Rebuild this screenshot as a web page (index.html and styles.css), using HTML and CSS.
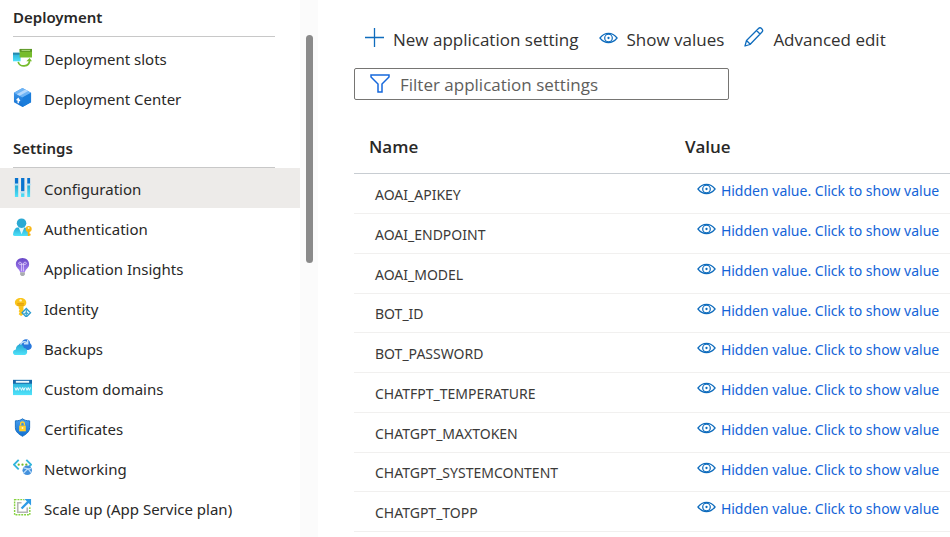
FILE: index.html
```html
<!DOCTYPE html>
<html lang="en">
<head>
<meta charset="utf-8">
<title>Configuration</title>
<link rel="stylesheet" href="styles.css">
</head>
<body>
<svg class="defs" aria-hidden="true">
  <defs>
    <linearGradient id="cyan" x1="0" y1="0" x2="0" y2="1"><stop offset="0" stop-color="#27a9d3"/><stop offset="1" stop-color="#4fe3fa"/></linearGradient>
    <linearGradient id="blue" x1="0" y1="0" x2="0" y2="1"><stop offset="0" stop-color="#4ba0ee"/><stop offset="1" stop-color="#0f6fd2"/></linearGradient>
    <linearGradient id="violet" x1="0" y1="0" x2="0" y2="1"><stop offset="0" stop-color="#6746c6"/><stop offset="1" stop-color="#a883f2"/></linearGradient>
    <symbol id="eye" viewBox="0 0 20 12">
      <g fill="none" stroke="currentColor" stroke-width="1.3"><path d="M1 6C3.500 2.800 6.500 1.200 10 1.200S16.500 2.800 19 6C16.500 9.200 13.500 10.800 10 10.800S3.500 9.200 1 6Z"/><circle cx="10" cy="6" r="4"/></g>
      <circle cx="10" cy="6" r="1.200" fill="currentColor"/>
    </symbol>
  </defs>
</svg>
<div class="app">
  <nav class="sidebar" aria-label="App service">
    <div class="menu">
      <h2 class="group first">Deployment</h2>
      <a class="item" href="#slots"><svg viewBox="0 0 20 20"><path fill="url(#cyan)" d="M0 5h8v9H0z"/><path fill="#2789ad" d="M0 5h7v2H0z"/><path fill="#76bc2d" d="M7 1h13v9H7z"/><path fill="#5a9624" d="M7 1h13v3H7z"/><path stroke="#b4dd8a" d="M9 2.500h9"/><path d="M5.500 14.500c1 6 12 6 12-2" fill="none" stroke="#76bc2d" stroke-width="1.800"/><path fill="#76bc2d" d="m14 14 3.500-3.500L20 14z"/></svg>Deployment slots</a>
      <a class="item" href="#center"><svg viewBox="0 0 20 20"><path fill="url(#blue)" d="m10 0 9 5v10l-9 5-9-5V5z"/><path fill="#6fb4f5" d="m1 5 9-5 9 5-9 5z"/><path fill="#1b7ddb" d="m10 10 9-5v10l-9 5z"/><path fill="#b4d8fc" d="m4 6.500 9-5 3 1.700-9 5z"/><path d="M5.500 16v-4M3.800 12.800l1.700-1.600 1.700 2.600" fill="none" stroke="#fff" stroke-width="1.400"/></svg>Deployment Center</a>
      <h2 class="group">Settings</h2>
      <a class="item selected" href="#configuration" aria-current="page"><svg viewBox="0 0 20 20"><path fill="#0873cf" d="M2 0h3.500v6H2zM8.500 0H12v14H8.500zM15 0h3v6h-3z"/><path fill="url(#cyan)" d="M2 7.500h3.500V20H2zM8.500 16H12v4H8.500zM15 7.500h3V20h-3z"/><path fill="#b7e4f6" d="M1 6h5.500v1.500H1zM7.500 14.500H13V16H7.500zM14 6h5v1.500h-5z"/></svg>Configuration</a>
      <a class="item" href="#authentication"><svg viewBox="0 0 20 20"><path fill="url(#cyan)" d="M0 17c1-5 3-7 5-7h7c2 0 4 2 4 9H2q-2 0-2-2z"/><path fill="#e4f8fd" d="M6 10h6l-3 7z"/><circle cx="9" cy="5.500" r="5" fill="#2ba9d3"/><circle cx="16.500" cy="11.500" r="3.200" fill="#f8b818"/><path d="M16.500 13v6M16.500 17.500h2" stroke="#f5ad10" stroke-width="1.900"/><circle cx="16.500" cy="10.500" r="1" fill="#fff2bd"/></svg>Authentication</a>
      <a class="item" href="#insights"><svg viewBox="0 0 20 20"><path fill="url(#violet)" d="M10 0C6 0 3 3 3 6.500c0 4 4 5 4.500 8.500h5c.5-3.500 4.500-4.500 4.500-8.500C17 3 14 0 10 0Z"/><path d="M9 14V6.500M11 14V6.500M9 7c-3.500.5-4-3-1.500-2.500C9 4.700 9 5.500 9 7M11 7c3.500.5 4-3 1.500-2.500C11 4.700 11 5.500 11 7M8 6.500h4" fill="none" stroke="#decef9" stroke-width=".9"/><path fill="#a9acaf" d="M7.500 15h5v2.500L11 19H9l-1.500-1.500z"/></svg>Application Insights</a>
      <a class="item" href="#identity"><svg viewBox="0 0 20 20"><path fill="#fac51c" d="M8 0c3.500 0 6 2 6 5 0 2-1.300 3.400-3 4v8l-2.500 2L6 17l1-2-1-1 1-2-1-1V9C3.500 8.400 2 7 2 5c0-3 2.500-5 6-5Z"/><circle cx="8" cy="2.500" r="1.300" fill="#fff5cb"/><path stroke="#e09a0a" d="M4.500 6h7M4.500 7.500h7"/><path fill="#e9f7fb" stroke="#2b9acf" stroke-width="1.300" d="m14 11 4.500 4.500L14 20l-4.500-4.500z"/><path d="M14 12v7M12 17l2-2 2 2" fill="none" stroke="#37a4cc" stroke-width="1.200"/></svg>Identity</a>
      <a class="item" href="#backups"><svg viewBox="0 0 20 20"><path fill="#2878dc" d="M8 12C5 9 6 5.500 9 5c1-5 9-5 9 .5 3 2 2 7-2 7z"/><path d="M8 8c0-4 4-5 7-3M15.500 2v4h-4" fill="none" stroke="#c2e0fa" stroke-width="1.500"/><path fill="url(#cyan)" d="M3 18c-4 0-4-5.500 0-6C3 6 10.500 5 11.500 10.500 16 10.500 16 18 12 18z"/></svg>Backups</a>
      <a class="item" href="#domains"><svg viewBox="0 0 20 20"><path fill="url(#cyan)" d="M0 2h20v16H0z"/><path fill="#1767a8" d="M0 2h20v4H0z"/><path fill="#eefaff" d="M3 3h14v2H3z"/><path d="m2 10 1.200 3 1.200-3 1.200 3 1.200-3m1 0L9 13l1.200-3 1.200 3 1.200-3m1 0 1.200 3 1.200-3 1.200 3 1.200-3" fill="none" stroke="#f4fdff" stroke-width="1"/></svg>Custom domains</a>
      <a class="item" href="#certificates"><svg viewBox="0 0 20 20"><path fill="url(#blue)" stroke="#176fc2" d="M2.500 3C5.500 3 8 2.500 10 .8 12 2.500 14.500 3 17.500 3v7c0 5-4 7-7.500 9.300C6.500 17 2.500 15 2.500 10z"/><path fill="#ffce2c" d="M6.500 8h7v6h-7z"/><path d="M8 8V6.500c0-3 4-3 4 0V8" fill="none" stroke="#ffce2c" stroke-width="1.400"/><circle cx="10" cy="10.500" r="1" fill="#fff4c7"/></svg>Certificates</a>
      <a class="item" href="#networking"><svg viewBox="0 0 20 20"><path d="M6 2 1 7l5 5M14 2l5 5-2 2" fill="none" stroke="#32b5dc" stroke-width="2"/><g fill="#76bc2d"><circle cx="6" cy="7" r="1.200"/><circle cx="10" cy="7" r="1.200"/><circle cx="14" cy="7" r="1.200"/></g><circle cx="15" cy="13" r="5" fill="#4390dc"/><path d="m11 10.500 5 1 3 4M11 16l4-4 4-1" fill="none" stroke="#b9dcfa" stroke-width="1.300"/></svg>Networking</a>
      <a class="item" href="#scale"><svg viewBox="0 0 20 20"><path d="M1.700 1.700h16v16h-16z" fill="none" stroke="#86d241" stroke-width="1.500" stroke-dasharray="2 1"/><path d="M9 5H5v10h10v-5" fill="none" stroke="#b4b4b4" stroke-width="1.700"/><path fill="#fff" d="M11 0h9v9h-4z"/><path d="m9 11 8-8" stroke="#2f9be5" stroke-width="2.400"/><path fill="#2f9be5" d="M12 1h7v7z"/></svg>Scale up (App Service plan)</a>
    </div>
    <div class="gutter"><div class="thumb"></div></div>
  </nav>
  <main class="content">
    <div class="toolbar">
      <button type="button" class="command"><svg class="command-icon" viewBox="0 0 20 20"><path d="M10.500 1v19M1 10.500h19" stroke="currentColor" stroke-width="1.300"/></svg><span>New application setting</span></button>
      <button type="button" class="command"><svg class="eye"><use href="#eye"/></svg><span>Show values</span></button>
      <button type="button" class="command"><svg class="command-icon" viewBox="0 0 20 20"><path d="m1 19 1.500-5.500L14.500 1.500c2-2 5.500 1.500 3.500 3.500L6 17.500zM12.500 3.500 16 7M2.500 13.500l4 4" fill="none" stroke="currentColor" stroke-width="1.300" stroke-linejoin="round"/></svg><span>Advanced edit</span></button>
    </div>
    <label class="filter">
      <svg viewBox="0 0 20 20"><path d="M1 1h18v2l-7 7v8H8v-8L1 3z" fill="none" stroke="currentColor" stroke-width="1.500"/></svg>
      <input type="text" placeholder="Filter application settings" aria-label="Filter application settings">
    </label>
    <table class="settings">
      <thead><tr><th scope="col">Name</th><th scope="col">Value</th></tr></thead>
      <tbody>
        <tr><td>AOAI_APIKEY</td><td><button type="button" class="reveal"><svg class="eye"><use href="#eye"/></svg><span>Hidden value. Click to show value</span></button></td></tr>
        <tr><td>AOAI_ENDPOINT</td><td><button type="button" class="reveal"><svg class="eye"><use href="#eye"/></svg><span>Hidden value. Click to show value</span></button></td></tr>
        <tr><td>AOAI_MODEL</td><td><button type="button" class="reveal"><svg class="eye"><use href="#eye"/></svg><span>Hidden value. Click to show value</span></button></td></tr>
        <tr><td>BOT_ID</td><td><button type="button" class="reveal"><svg class="eye"><use href="#eye"/></svg><span>Hidden value. Click to show value</span></button></td></tr>
        <tr><td>BOT_PASSWORD</td><td><button type="button" class="reveal"><svg class="eye"><use href="#eye"/></svg><span>Hidden value. Click to show value</span></button></td></tr>
        <tr><td>CHATFPT_TEMPERATURE</td><td><button type="button" class="reveal"><svg class="eye"><use href="#eye"/></svg><span>Hidden value. Click to show value</span></button></td></tr>
        <tr><td>CHATGPT_MAXTOKEN</td><td><button type="button" class="reveal"><svg class="eye"><use href="#eye"/></svg><span>Hidden value. Click to show value</span></button></td></tr>
        <tr><td>CHATGPT_SYSTEMCONTENT</td><td><button type="button" class="reveal"><svg class="eye"><use href="#eye"/></svg><span>Hidden value. Click to show value</span></button></td></tr>
        <tr><td>CHATGPT_TOPP</td><td><button type="button" class="reveal"><svg class="eye"><use href="#eye"/></svg><span>Hidden value. Click to show value</span></button></td></tr>
      </tbody>
    </table>
  </main>
</div>
</body>
</html>
```

FILE: styles.css
```css
* { box-sizing: border-box; }
body {
  margin: 0;
  background: #fff;
  color: #292827;
  font-family: "Segoe UI", "Noto Sans", "Open Sans", sans-serif;
  font-size: 15px;
}
button, input { font: inherit; }
button { border: 0; padding: 0; background: none; cursor: pointer; }
.defs { display: block; width: 0; height: 0; }
.app { display: flex; min-height: 100vh; }

.sidebar { display: flex; flex: none; }
.menu { width: 300px; }
.group {
  height: 50px;
  margin: 0 25px 0 13px;
  padding-top: 20px;
  border-bottom: 1px solid #c8c8c8;
  font-size: 15px;
  font-weight: 600;
  line-height: 20px;
}
.group.first { height: 37px; margin-bottom: 1px; padding-top: 7px; }
.item {
  display: flex;
  align-items: center;
  gap: 12px;
  height: 40px;
  padding: 1px 0 0 13px;
  color: inherit;
  text-decoration: none;
  white-space: nowrap;
}
.item svg { width: 19px; height: 19px; margin-bottom: 2px; }
.item.selected { background: #edebe9; }
.gutter { width: 18px; padding: 35px 5px 0 6px; background: #fbfbfb; }
.thumb { height: 228px; border-radius: 4px; background: #8a8a8a; }

.content { flex: 1; min-width: 0; padding: 25px 0 0 36px; }
.toolbar {
  display: flex;
  gap: 20px;
  height: 28px;
  padding-left: 10px;
  font-family: "Segoe UI", "Open Sans", sans-serif;
  font-size: 17px;
  line-height: 30px;
}
.command { display: flex; gap: 9px; color: #323130; white-space: nowrap; }
.command svg { margin-top: 2px; color: #0f6cbd; }
.command-icon { width: 20px; height: 20px; }
.eye { width: 19px; height: 12px; flex: none; }
.command .eye { margin-top: 7px; }

.filter {
  display: flex;
  align-items: center;
  gap: 10px;
  width: 375px;
  max-width: 100%;
  height: 32px;
  margin-top: 15px;
  padding: 0 15px;
  border: 1px solid #767573;
  border-radius: 2px;
  font-family: "Segoe UI", "Open Sans", sans-serif;
}
.filter svg { width: 20px; height: 20px; color: #1668dc; }
.filter input {
  flex: 1;
  min-width: 0;
  border: 0;
  padding: 0;
  outline: 0;
  background: none;
  font-size: 17px;
}
.filter input::placeholder { color: #605e5c; opacity: 1; }

.settings {
  width: 100%;
  margin-top: 20px;
  border-collapse: separate;
  border-spacing: 0;
  table-layout: fixed;
}
.settings th {
  height: 54px;
  padding: 0 0 0 15px;
  border-bottom: 1px solid #c8cdd2;
  font-family: "Segoe UI", "Open Sans", sans-serif;
  font-size: 17px;
  font-weight: 600;
  text-align: left;
}
.settings th:first-child { width: 53%; }
.settings td {
  height: 40px;
  padding: 1px 0 0 21px;
  border-bottom: 1px solid #f1f0ef;
  color: #3b3a39;
  font-size: 14px;
  white-space: nowrap;
}
.settings tr:nth-child(4n) td { height: 39px; }
.settings td + td { padding: 0 0 5px 27px; }
.reveal { display: flex; gap: 5px; color: #1464d8; line-height: 20px; }
.reveal .eye { margin-top: 2px; color: #0f6cbd; }
```
